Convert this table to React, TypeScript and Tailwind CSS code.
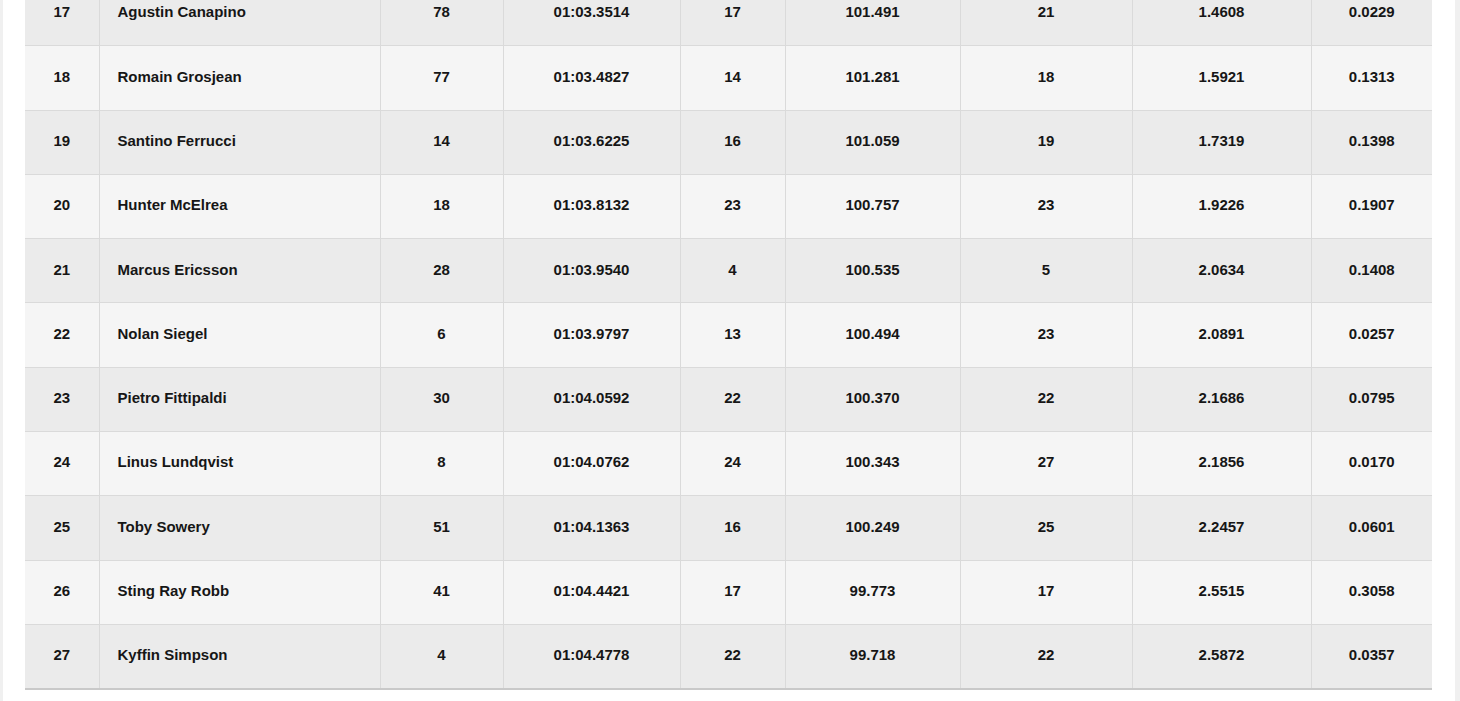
const rows: [number, string, number, string, number, string, number, string, string][] = [
  [17, "Agustin Canapino", 78, "01:03.3514", 17, "101.491", 21, "1.4608", "0.0229"],
  [18, "Romain Grosjean", 77, "01:03.4827", 14, "101.281", 18, "1.5921", "0.1313"],
  [19, "Santino Ferrucci", 14, "01:03.6225", 16, "101.059", 19, "1.7319", "0.1398"],
  [20, "Hunter McElrea", 18, "01:03.8132", 23, "100.757", 23, "1.9226", "0.1907"],
  [21, "Marcus Ericsson", 28, "01:03.9540", 4, "100.535", 5, "2.0634", "0.1408"],
  [22, "Nolan Siegel", 6, "01:03.9797", 13, "100.494", 23, "2.0891", "0.0257"],
  [23, "Pietro Fittipaldi", 30, "01:04.0592", 22, "100.370", 22, "2.1686", "0.0795"],
  [24, "Linus Lundqvist", 8, "01:04.0762", 24, "100.343", 27, "2.1856", "0.0170"],
  [25, "Toby Sowery", 51, "01:04.1363", 16, "100.249", 25, "2.2457", "0.0601"],
  [26, "Sting Ray Robb", 41, "01:04.4421", 17, "99.773", 17, "2.5515", "0.3058"],
  [27, "Kyffin Simpson", 4, "01:04.4778", 22, "99.718", 22, "2.5872", "0.0357"],
];

const widths = ["w-[74px]", "w-[281px]", "w-[123px]", "w-[177px]", "w-[105px]", "w-[175px]", "w-[172px]", "w-[179px]", "w-[121px]"];

export default function App() {
  return (
    <div className="h-[701px] w-full overflow-hidden bg-white">
      <div className="flex h-full">
        <div className="w-[3px] shrink-0 bg-[#f0f0f0]" />
        <div className="flex-1 overflow-hidden pl-[22px] pr-[22px]">
          <table
            className="-mt-[19px] w-[1407px] table-fixed border-collapse border-b-2 border-b-[#c9c9c9] text-[15px] font-bold text-[#161616]"
            style={{ fontFamily: '"Liberation Sans", Arial, sans-serif' }}
          >
            <colgroup>
              {widths.map((w, i) => (
                <col key={i} className={w} />
              ))}
            </colgroup>
            <tbody>
              {rows.map((r, i) => (
                <tr
                  key={r[0]}
                  className={`h-[64.3px] ${i % 2 === 0 ? "bg-[#ebebeb]" : "bg-[#f5f5f5]"} border-t border-[#dadada]`}
                >
                  {r.map((c, j) => (
                    <td
                      key={j}
                      className={`${j > 0 ? "border-l border-[#dadada]" : ""} ${
                        j === 1 ? "pl-[18px] text-left" : "text-center"
                      } pb-[2px] align-middle`}
                    >
                      {c}
                    </td>
                  ))}
                </tr>
              ))}
            </tbody>
          </table>
        </div>
        <div className="w-[5px] shrink-0 bg-[#f0f0f0]" />
      </div>
    </div>
  );
}
